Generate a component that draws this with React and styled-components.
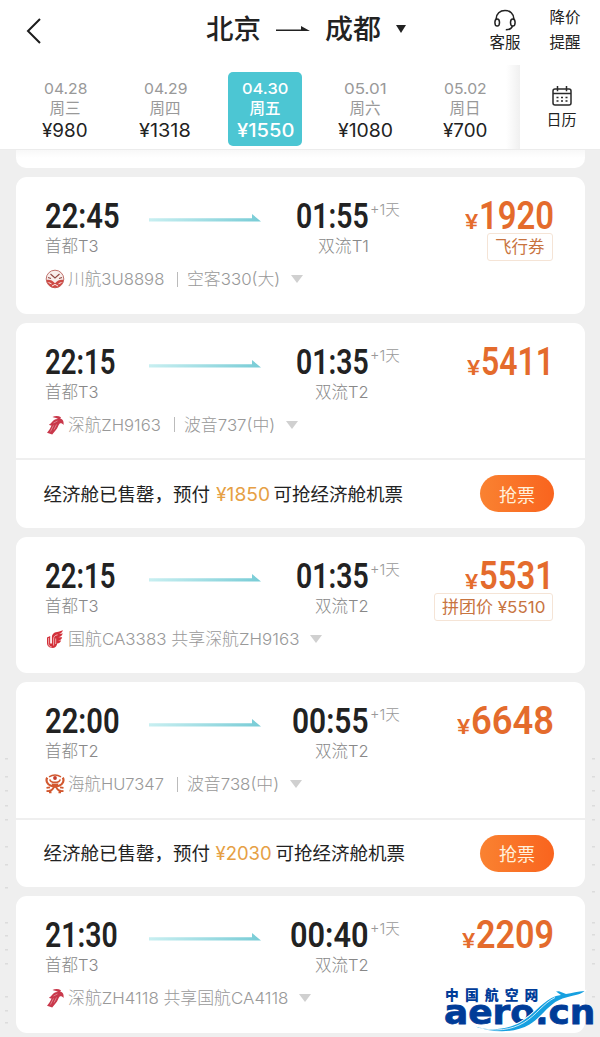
import React, { useLayoutEffect, useRef, useState } from 'react';
import styled, { createGlobalStyle, css } from 'styled-components';

const days = [
  { date: '04.28', week: '周三', price: '¥980', width: 46 },
  { date: '04.29', week: '周四', price: '¥1318', width: 52 },
  { date: '04.30', week: '周五', price: '¥1550', width: 57, active: true },
  { date: '05.01', week: '周六', price: '¥1080', width: 55 },
  { date: '05.02', week: '周日', price: '¥700', width: 45 },
];

const flights = [
  {
    id: 1, dep: '22:45', depW: 75, from: '首都T3', arr: '01:55', arrW: 73, to: '双流T1', toW: 51,
    price: '1920', priceW: 75, tag: '飞行券', tagW: 50,
    logo: 'sichuan', airline: '川航3U8898', airlineW: 96, plane: '空客330(大)', planeW: 93,
  },
  {
    id: 2, dep: '22:15', depW: 71, from: '首都T3', arr: '01:35', arrW: 73, to: '双流T2', toW: 54,
    price: '5411', priceW: 73,
    logo: 'shenzhen', airline: '深航ZH9163', airlineW: 93, plane: '波音737(中)', planeW: 91,
    grab: '¥1850', grabW: 54,
  },
  {
    id: 3, dep: '22:15', depW: 71, from: '首都T3', arr: '01:35', arrW: 73, to: '双流T2', toW: 54,
    price: '5531', priceW: 75, tag: '拼团价 ¥5510', tagW: 103,
    logo: 'china', airline: '国航CA3383 共享深航ZH9163', airlineW: 231,
  },
  {
    id: 4, dep: '22:00', depW: 75, from: '首都T2', arr: '00:55', arrW: 77, to: '双流T2', toW: 54,
    price: '6648', priceW: 83,
    logo: 'hainan', airline: '海航HU7347', airlineW: 96, plane: '波音738(中)', planeW: 92,
    grab: '¥2030', grabW: 56,
  },
  {
    id: 5, dep: '21:30', depW: 73, from: '首都T3', arr: '00:40', arrW: 79, to: '双流T2', toW: 54,
    price: '2209', priceW: 78,
    logo: 'shenzhen', airline: '深航ZH4118 共享国航CA4118', airlineW: 220,
  },
];

const leftMarks = [758, 776, 790, 805, 819, 846, 864, 887, 922, 935, 949, 963, 996, 1010, 1022];
const rightMarks = [758, 776, 790, 805, 819, 846, 864, 891, 922, 934, 949, 963, 996];

// Squeezes or stretches a line of text to a given width
function Fit({ width, children }) {
  const ref = useRef(null);
  const [scale, setScale] = useState(1);

  useLayoutEffect(() => {
    if (ref.current) {
      setScale(width / ref.current.offsetWidth);
    }
  }, [width, children]);

  return (
    <FitBox $width={width}>
      <FitText ref={ref} style={{ transform: `scaleX(${scale})` }}>{children}</FitText>
    </FitBox>
  );
}

function AirlineLogo({ name }) {
  switch (name) {
    case 'sichuan':
      return (
        <svg width="20" height="20" viewBox="0 0 20 20">
          <circle cx="10" cy="10" r="8.8" fill="#f8eeec" stroke="#b9625c" strokeWidth="0.9" />
          <path d="M1.600 11c3-.6 6 .6 8.400 3.200 2.400-2.600 5.400-3.800 8.400-3.200-.5 4.500-4 7.800-8.400 7.800S2.100 15.500 1.600 11z" fill="#cf4a45" />
          <path d="M5.500 5l4.500 4 4.500-4M3 8.500l3 1M17 8.500l-3 1" fill="none" stroke="#8f4640" strokeWidth="1.100" />
          <path d="M3.500 13.500l3 1.300M16.500 13.500l-3 1.300M7 17l3-1.600 3 1.600" fill="none" stroke="#fff" strokeWidth="0.9" />
        </svg>
      );
    case 'shenzhen':
      return (
        <svg width="20" height="20" viewBox="0 0 20 20">
          <path d="M7.500 2c2.500-1.200 6-1.200 8.500.2l-.8 1.300c1.900.6 3 1.600 3.300 3.500l.2 3c-1.200-1.400-2.500-1.900-4-1.500-1.700 1.500-1.700 4.600-4 6.800L7.200 19.500 2 17.800c2-2.500 3.600-5 4.500-7.400-1.200.1-2-.2-2.500-1 2.200-.6 3-2.700 5-4.400 1.200-.9 2.500-1.200 4-1.100C11 2.900 9.500 2.700 7.500 2z" fill="#c9384b" />
          <path d="M8.500 8l4-2M8.500 10.500L5.500 16.500M11.500 9.500l-2.500 5" fill="none" stroke="#e39aa2" strokeWidth="0.7" />
        </svg>
      );
    case 'china':
      return (
        <svg width="20" height="20" viewBox="0 0 20 20">
          <path d="M2 8.500l3.200-1.500v7c0 1 1.700 1 1.700 0V8.500c0-4 3-5.500 6.500-5.700L18 1.200c-.6 2-2.200 3.200-4.500 3.600 1.700.1 3 0 4.200-.5-.4 2.300-2 3.700-4.500 4h4c-.6 2.200-2.200 3.100-4.400 3.100h3.400c-.8 2-2.200 2.900-4 3-.3 2.300-1.500 4-4.200 4.600-4 0-6-1.900-6-5.200z" fill="#d2303a" />
          <path d="M8.600 16.500V10c0-2.500 1.300-3.700 4-4.200M10.700 15V9.500M3.600 9v5.500c0 2 1 3.200 3 3.200" fill="none" stroke="#f7c9c9" strokeWidth="0.8" />
        </svg>
      );
    case 'hainan':
      return (
        <svg width="20" height="20" viewBox="0 0 20 20">
          <path d="M2.200 3.600C.5 6.600 2.200 10.500 6 11.800c2.600.9 5.400.9 8 0 3.800-1.300 5.500-5.200 3.800-8.200" fill="none" stroke="#d2582f" strokeWidth="2.200" />
          <path d="M4.800 5.300c.5 4 9.900 4 10.400 0M4 2.800c3.500-2 8.500-2 12 0" fill="none" stroke="#d2582f" strokeWidth="1.500" />
          <circle cx="10" cy="4" r="1.9" fill="#c53d2b" />
          <path d="M6.500 9.500h7l-1.600 4.200H8.100z" fill="#d2582f" />
          <path d="M9 13c-1.500 3-4 4.600-7.500 3.900M11 13c1.500 3 4 4.600 7.500 3.900M1.500 13.800l3.500-.5M18.500 13.800l-3.500-.5M4 18.300h2.500M13.500 18.300H16" fill="none" stroke="#d2582f" strokeWidth="1.700" />
        </svg>
      );
    default:
      return null;
  }
}

function RouteArrow({ id }) {
  return (
    <svg width="112" height="8" viewBox="0 0 112 8">
      <defs>
        <linearGradient id={`route-${id}`} x1="0" x2="1" y1="0" y2="0">
          <stop offset="0" stopColor="#c8eff1" />
          <stop offset="1" stopColor="#78ccd6" />
        </linearGradient>
      </defs>
      <path d="M0 4.300h103V0l9 7.500H0z" fill={`url(#route-${id})`} />
    </svg>
  );
}

function FlightCard({ flight }) {
  return (
    <Card>
      <CardMain $short={!!flight.grab}>
        <Schedule>
          <Departure>
            <Time><Fit width={flight.depW}>{flight.dep}</Fit></Time>
            <Airport><Fit width={54}>{flight.from}</Fit></Airport>
          </Departure>
          <Route><RouteArrow id={flight.id} /></Route>
          <Arrival>
            <Time><Fit width={flight.arrW}>{flight.arr}</Fit></Time>
            <Airport><Fit width={flight.toW}>{flight.to}</Fit></Airport>
          </Arrival>
          <NextDay><Fit width={30}>+1天</Fit></NextDay>
          <PriceColumn>
            <Price>
              <Currency><Fit width={13}>¥</Fit></Currency>
              <Fit width={flight.priceW}>{flight.price}</Fit>
            </Price>
            {flight.tag && <Tag><Fit width={flight.tagW}>{flight.tag}</Fit></Tag>}
          </PriceColumn>
        </Schedule>
        <AirlineRow>
          <AirlineLogo name={flight.logo} />
          <AirlineName><Fit width={flight.airlineW}>{flight.airline}</Fit></AirlineName>
          {flight.plane && (
            <>
              <Separator />
              <Fit width={flight.planeW}>{flight.plane}</Fit>
            </>
          )}
          <Caret $size={6.5} $height={8} $color="#d0d0d0" $gap={11} />
        </AirlineRow>
      </CardMain>
      {flight.grab && (
        <GrabRow>
          <Fit width={167}>经济舱已售罄，预付</Fit>
          <GrabPrice><Fit width={flight.grabW}>{flight.grab}</Fit></GrabPrice>
          <Fit width={130}>可抢经济舱机票</Fit>
          <GrabButton type="button">抢票</GrabButton>
        </GrabRow>
      )}
    </Card>
  );
}

function App() {
  return (
    <>
      <GlobalStyle />
      <Page>
        <Header>
          <TitleBar>
            <BackButton type="button">
              <svg width="16" height="26" viewBox="0 0 16 26">
                <path d="M14 1L2 13l12 12" fill="none" stroke="#1c1c1c" strokeWidth="2" />
              </svg>
            </BackButton>
            <Title>
              <Fit width={55}>北京</Fit>
              <svg width="34" height="8" viewBox="0 0 34 8">
                <path d="M0 3.500h25V0l9 5H0z" fill="#222" />
              </svg>
              <Fit width={56}>成都</Fit>
              <Caret $size={5.5} $height={8} $color="#222" $gap={0} />
            </Title>
            <HeaderAction $first>
              <svg width="24" height="23" viewBox="0 0 24 23">
                <path d="M3.200 12V9.800C3.200 4.800 7 1.500 12 1.500s8.800 3.300 8.800 8.300V12" fill="none" stroke="#222" strokeWidth="1.600" />
                <ellipse cx="4.200" cy="13.500" rx="2.300" ry="3.500" fill="#fff" stroke="#222" strokeWidth="1.500" />
                <ellipse cx="19.800" cy="13.500" rx="2.300" ry="3.500" fill="#fff" stroke="#222" strokeWidth="1.500" />
                <path d="M19.500 17c-.8 2.600-2.800 3.800-6.700 3.800" fill="none" stroke="#222" strokeWidth="1.600" />
              </svg>
              <span>客服</span>
            </HeaderAction>
            <HeaderAction>
              <span>降价</span>
              <span>提醒</span>
            </HeaderAction>
          </TitleBar>
          <DateBar>
            <DateList>
              {days.map((day) => (
                <Day key={day.date} $active={day.active}>
                  <DayDate><Fit width={day.active ? 46 : 43}>{day.date}</Fit></DayDate>
                  <DayWeek>{day.week}</DayWeek>
                  <DayPrice $active={day.active}><Fit width={day.width}>{day.price}</Fit></DayPrice>
                </Day>
              ))}
            </DateList>
            <CalendarButton>
              <svg width="20" height="20" viewBox="0 0 20 20">
                <rect x="1" y="3" width="18" height="16" rx="2" fill="none" stroke="#2a2a2a" strokeWidth="1.500" />
                <path d="M5.500 0v5.200M14.500 0v5.200M1 7.500h18" stroke="#2a2a2a" strokeWidth="1.500" />
                <path d="M4.500 11.500h2M9 11.500h2M13.500 11.500h2M4.500 15h2M9 15h2M13.500 15h2" stroke="#2a2a2a" strokeWidth="1.700" />
              </svg>
              <span>日历</span>
            </CalendarButton>
          </DateBar>
        </Header>
        <List>
          <CardEnd />
          {flights.map((flight) => <FlightCard key={flight.id} flight={flight} />)}
        </List>
        <Marks width="600" height="1037" viewBox="0 0 600 1037">
          {leftMarks.map((y) => <rect key={y} x="5" y={y} width="3" height="1.500" fill="#dcdcdc" />)}
          {rightMarks.map((y) => <rect key={y} x="592" y={y} width="3" height="1.500" fill="#dcdcdc" />)}
        </Marks>
        <Watermark>
          <WatermarkName><Fit width={100}>中国航空网</Fit></WatermarkName>
          <WatermarkSite><Fit width={151}>aero.cn</Fit></WatermarkSite>
          <Swoosh width="155" height="48" viewBox="0 0 155 48">
            <path d="M26 36c14 6 35 6 50-3 14-8 20-20 35-26l5-1-5-3.500 3-.3 7 2.800c6-1 12-2.500 18.500-3-2 2.300-7 4-13 5l-9 2.500c-14 5-20 18-33 26-15 9-38 9-58.500.5z" fill="#16a0e0" stroke="#fff" strokeWidth="2" paintOrder="stroke" />
            <path d="M34 38.800c16 4 32 2.500 45-5.300 13-8 19-19 31-25" fill="none" stroke="#fff" strokeWidth="0.8" />
          </Swoosh>
        </Watermark>
      </Page>
    </>
  );
}

const GlobalStyle = createGlobalStyle`
  * {
    box-sizing: border-box;
  }
  body {
    margin: 0;
    background: #efefef;
    font-family: Inter, "Noto Sans CJK SC", sans-serif;
    color: #222;
  }
  button {
    padding: 0;
    border: none;
    font-family: inherit;
  }
  svg {
    display: block;
    flex-shrink: 0;
  }
`;

const FitBox = styled.span`
  display: inline-block;
  flex-shrink: 0;
  width: ${(p) => p.$width}px;
  white-space: nowrap;
`;

const FitText = styled.span`
  display: inline-block;
  transform-origin: left center;
`;

const Page = styled.div`
  position: relative;
  width: 600px;
  height: 1037px;
  overflow: hidden;
  background: #efefef;
`;

const Header = styled.header`
  height: 150px;
  background: #fff;
  border-bottom: 1px solid #ececec;
`;

const TitleBar = styled.div`
  display: flex;
  height: 65px;
  padding-left: 26px;
`;

const BackButton = styled.button`
  width: 16px;
  height: 62px;
  background: none;
`;

const Title = styled.h1`
  display: flex;
  align-items: center;
  gap: 15px;
  width: 202px;
  height: 60px;
  margin: 0 0 0 164px;
  font-size: 27px;
  font-weight: 500;
  line-height: 36px;

  svg {
    margin-bottom: 1px;
  }

  i {
    margin-bottom: 3px;
  }
`;

const HeaderAction = styled.div`
  display: flex;
  flex-direction: column;
  align-items: center;
  width: 32px;
  margin-left: ${(p) => (p.$first ? 81 : 28)}px;
  padding-top: ${(p) => (p.$first ? 9 : 5)}px;
  font-size: 15.5px;
  line-height: 25px;
  white-space: nowrap;

  svg + span {
    line-height: 21px;
  }
`;

const Caret = styled.i`
  flex-shrink: 0;
  width: 0;
  height: 0;
  margin-left: ${(p) => p.$gap}px;
  border-left: ${(p) => p.$size}px solid transparent;
  border-right: ${(p) => p.$size}px solid transparent;
  border-top: ${(p) => p.$height}px solid ${(p) => p.$color};
`;

const DateBar = styled.div`
  display: flex;
  height: 84px;
`;

const DateList = styled.div`
  display: flex;
  gap: 26px;
  width: 520px;
  padding: 7px 0 0 28px;
  background: linear-gradient(90deg, #fff 506px, #f0f0f0 520px);
`;

const Day = styled.div`
  display: flex;
  flex-direction: column;
  align-items: center;
  width: 74px;
  height: 74px;
  padding-top: 7px;
  border-radius: 5px;
  color: #999;
  font-weight: 400;

  ${(p) => p.$active && css`
    background: #4cc6d3;
    color: #fff;
    font-weight: 500;
  `}
`;

const DayDate = styled.div`
  height: 19px;
  font-size: 15px;
  line-height: 19px;
`;

const DayWeek = styled.div`
  height: 21px;
  font-size: 15.5px;
  line-height: 21px;
`;

const DayPrice = styled.div`
  height: 23px;
  font-size: 18px;
  line-height: 23px;
  color: ${(p) => (p.$active ? '#fff' : '#222')};
`;

const CalendarButton = styled.div`
  display: flex;
  flex-direction: column;
  align-items: center;
  gap: 3px;
  width: 80px;
  padding: 21px 0 0 3px;
  background: #fff;
  font-size: 15px;
  line-height: 22px;
`;

const List = styled.main`
  display: flex;
  flex-direction: column;
  gap: 9px;
  padding: 0 15.5px;
`;

const CardEnd = styled.div`
  height: 18px;
  border-radius: 0 0 10px 10px;
  background: linear-gradient(#f8f8f8, #fff 8px);
`;

const Card = styled.section`
  border-radius: 11px;
  background: #fff;
`;

const CardMain = styled.div`
  height: ${(p) => (p.$short ? 135.5 : 136.5)}px;
  padding: 20px 30.5px 0 29.5px;
`;

const Schedule = styled.div`
  display: flex;
  height: 61px;
`;

const Departure = styled.div`
  width: 104px;
`;

const Arrival = styled.div`
  display: flex;
  flex-direction: column;
  align-items: flex-end;
  width: 108px;
`;

const Time = styled.div`
  height: 37px;
  font-family: Roboto, sans-serif;
  font-size: 35px;
  font-weight: 600;
  line-height: 39px;
`;

const Airport = styled.div`
  height: 24px;
  font-size: 16.5px;
  font-weight: 300;
  line-height: 24px;
  color: #888;
`;

const Route = styled.div`
  width: 112px;
  padding-top: 17px;
`;

const NextDay = styled.div`
  padding-left: 1px;
  font-size: 15px;
  font-weight: 300;
  line-height: 26px;
  color: #999;
`;

const PriceColumn = styled.div`
  display: flex;
  flex: 1;
  flex-direction: column;
  align-items: flex-end;
`;

const Price = styled.div`
  display: flex;
  height: 36px;
  font-family: Roboto, sans-serif;
  font-size: 39px;
  font-weight: 600;
  line-height: 39px;
  color: #e46b2c;
`;

const Currency = styled.span`
  margin-right: 1px;
  font-size: 21px;
  font-weight: 500;
  line-height: 51px;
`;

const Tag = styled.div`
  height: 28px;
  margin-right: 1px;
  padding: 0 7px;
  border: 1px solid #f5e4d6;
  border-radius: 3px;
  font-size: 16.5px;
  line-height: 26px;
  color: #c8743f;
`;

const AirlineRow = styled.div`
  display: flex;
  align-items: center;
  height: 24px;
  margin-top: 9px;
  font-size: 16.5px;
  font-weight: 300;
  line-height: 24px;
  color: #999;
`;

const AirlineName = styled.div`
  margin-left: 3px;
`;

const Separator = styled.i`
  width: 1px;
  height: 15px;
  margin: 0 9px 0 13px;
  background: #bbb;
`;

const GrabRow = styled.div`
  display: flex;
  align-items: center;
  height: 69.5px;
  padding: 0 30.5px 0 28px;
  border-top: 2px solid #efefef;
  font-size: 18.5px;
  line-height: 28px;
`;

const GrabPrice = styled.span`
  margin: 0 4px 0 5px;
  color: #e6a044;
`;

const GrabButton = styled.button`
  width: 74px;
  height: 37px;
  margin-left: auto;
  border-radius: 19px;
  background: linear-gradient(90deg, #fa8231, #f9641e);
  font-size: 18px;
  color: #fff1dc;
`;

const Marks = styled.svg`
  position: absolute;
  left: 0;
  top: 0;
  pointer-events: none;
`;

const Watermark = styled.div`
  position: absolute;
  left: 444px;
  bottom: 0;
  width: 156px;
  height: 50px;
  color: #003c98;
`;

const WatermarkName = styled.div`
  height: 17px;
  padding-left: 1px;
  font-size: 13.5px;
  font-weight: 800;
  letter-spacing: 6px;
  line-height: 17px;
`;

const WatermarkSite = styled.div`
  height: 33px;
  font-family: "DejaVu Sans", sans-serif;
  font-size: 34px;
  font-weight: 700;
  line-height: 17px;
  -webkit-text-stroke: 0.8px #003c98;
`;

const Swoosh = styled.svg`
  position: absolute;
  left: 1px;
  top: 2px;
`;

export default App;
